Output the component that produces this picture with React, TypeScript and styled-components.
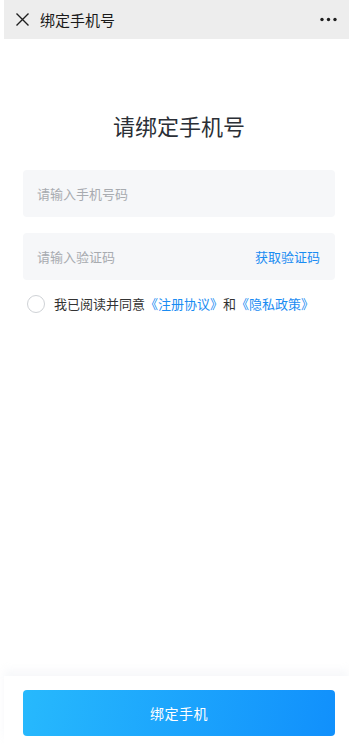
import styled, { createGlobalStyle } from "styled-components";

const GlobalStyle = createGlobalStyle`
  html, body {
    margin: 0;
    padding: 0;
    background: #ffffff;
    font-family: "Noto Sans CJK SC", "Noto Sans", sans-serif;
  }
  * { box-sizing: border-box; }
`;

const Page = styled.div`
  display: flex;
  flex-direction: column;
  height: 744px;
  padding-left: 4px;
  background: #fff;
`;

const NavBar = styled.header`
  display: flex;
  align-items: center;
  height: 39px;
  padding: 0 12px 0 10px;
  background: #ededed;
  flex-shrink: 0;
`;

const NavIcon = styled.button`
  display: inline-flex;
  align-items: center;
  justify-content: center;
  padding: 0;
  border: 0;
  background: none;
  color: #1f1f1f;
  width: 16px;
  height: 16px;
`;

const NavTitle = styled.h1`
  margin: 0 0 0 10px;
  font-size: 15px;
  font-weight: 400;
  color: #1a1a1a;
  flex: 1;
`;

const Main = styled.main`
  flex: 1;
  display: flex;
  flex-direction: column;
  padding: 71px 14px 0 19px;
`;

const Heading = styled.h2`
  margin: 0 0 30px;
  text-align: center;
  font-size: 22px;
  font-weight: 400;
  line-height: 30px;
  color: #2b2f36;
`;

const Field = styled.div`
  display: flex;
  align-items: center;
  height: 47px;
  padding: 0 15px 0 14px;
  margin-bottom: 16px;
  background: #f6f7f9;
  border-radius: 4px;
`;

const Input = styled.input`
  flex: 1;
  min-width: 0;
  border: 0;
  outline: none;
  background: transparent;
  font-family: inherit;
  font-size: 13px;
  color: #333;
  padding: 0;

  &::placeholder {
    color: #a8abb0;
  }
`;

const CodeLink = styled.span`
  font-size: 13px;
  color: #1a8cf2;
`;

const AgreeRow = styled.label`
  display: flex;
  align-items: center;
  margin: -2px 0 0 4px;
  font-size: 13px;
  color: #333;
`;

const Radio = styled.span`
  width: 18px;
  height: 18px;
  border-radius: 50%;
  border: 1px solid #cfd2d6;
  margin-right: 9px;
  flex-shrink: 0;
`;

const Link = styled.span`
  color: #1a8cf2;
`;

const Footer = styled.footer`
  flex-shrink: 0;
  padding: 14px 14px 8px 19px;
  background: #fff;
  box-shadow: 0 -6px 8px rgba(230, 233, 240, 0.3);
`;

const PrimaryButton = styled.button`
  width: 100%;
  height: 46px;
  border: 0;
  border-radius: 4px;
  background: linear-gradient(100deg, #27b9fd 0%, #1190fc 100%);
  color: #fff;
  font-family: inherit;
  font-size: 14px;
  letter-spacing: 0.5px;
`;

export default function App() {
  return (
    <>
      <GlobalStyle />
      <Page>
        <NavBar>
          <NavIcon aria-label="关闭">
            <svg width="15" height="15" viewBox="0 0 15 15" fill="none">
              <path d="M1.5 1.5 13.5 13.5M13.5 1.5 1.5 13.5" stroke="currentColor" strokeWidth="1.4" />
            </svg>
          </NavIcon>
          <NavTitle>绑定手机号</NavTitle>
          <NavIcon aria-label="更多" style={{ width: 18 }}>
            <svg width="17" height="5" viewBox="0 0 17 5">
              <circle cx="2" cy="2.5" r="1.7" fill="currentColor" />
              <circle cx="8.5" cy="2.5" r="1.7" fill="currentColor" />
              <circle cx="15" cy="2.5" r="1.7" fill="currentColor" />
            </svg>
          </NavIcon>
        </NavBar>

        <Main>
          <Heading>请绑定手机号</Heading>
          <Field>
            <Input placeholder="请输入手机号码" />
          </Field>
          <Field>
            <Input placeholder="请输入验证码" />
            <CodeLink>获取验证码</CodeLink>
          </Field>
          <AgreeRow>
            <Radio />
            我已阅读并同意<Link>《注册协议》</Link>和<Link>《隐私政策》</Link>
          </AgreeRow>
        </Main>

        <Footer>
          <PrimaryButton type="button">绑定手机</PrimaryButton>
        </Footer>
      </Page>
    </>
  );
}
